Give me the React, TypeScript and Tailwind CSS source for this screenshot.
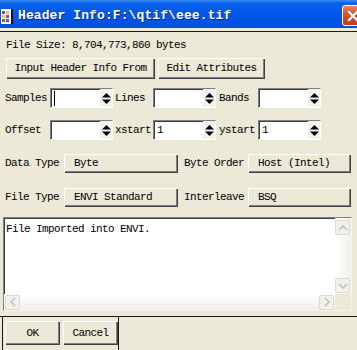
import type { ReactNode } from "react";

// Classic Win32-ish dialog: "Header Info" (ENVI)

const font = "font-['Liberation_Mono','DejaVu_Sans_Mono',monospace] text-[11px] tracking-[-0.6px]";

function Spinner() {
  return (
    <svg width="9" height="11" viewBox="0 0 9 11" aria-hidden>
      <polygon points="0,4.5 4.5,0 9,4.5" fill="#000" />
      <polygon points="0,6.5 4.5,11 9,6.5" fill="#000" />
    </svg>
  );
}

function Field({ value, caret }: { value?: string; caret?: boolean }) {
  return (
    <div className="w-[63px] h-[20px] flex bg-white border-t border-l border-[#808080] border-r border-b border-r-white border-b-white shadow-[inset_1px_1px_0_#404040]">
      <div className="flex-1 flex items-center pl-[3px] text-black">
        {caret ? <span className="w-px h-[15px] bg-black" /> : value}
      </div>
      <div className="w-[12px] flex items-center justify-center bg-[#F4F3EE]">
        <Spinner />
      </div>
    </div>
  );
}

function Btn({ children, className = "", left }: { children: ReactNode; className?: string; left?: boolean }) {
  return (
    <div
      className={`flex items-center ${left ? "justify-start pl-[10px]" : "justify-center"} bg-[#ECE9D8] text-black shadow-[inset_1px_1px_0_#fff,inset_-1px_-1px_0_#404040,inset_-2px_-2px_0_#808080] ${className}`}
    >
      {children}
    </div>
  );
}

function ArrowBtn({ dir, className = "" }: { dir: "up" | "down" | "left" | "right"; className?: string }) {
  const pts = {
    up: "2,8 6,4 10,8",
    down: "2,4 6,8 10,4",
    left: "8,2 4,6 8,10",
    right: "4,2 8,6 4,10",
  }[dir];
  return (
    <div className={`w-[15px] h-[15px] rounded-[2px] border border-[#DCDCD4] bg-[#F1F0EA] flex items-center justify-center ${className}`}>
      <svg width="12" height="12" viewBox="0 0 12 12" aria-hidden>
        <polyline points={pts} fill="none" stroke="#C4C3BC" strokeWidth="1.6" />
      </svg>
    </div>
  );
}

function AppIcon() {
  return (
    <svg width="13" height="15" viewBox="0 0 13 15" aria-hidden>
      <rect x="0" y="0" width="12" height="15" fill="#fff" />
      <rect x="1" y="2" width="3" height="3" fill="#3B5BD8" />
      <rect x="5" y="2" width="3" height="3" fill="#E8C23A" />
      <rect x="1" y="6" width="3" height="3" fill="#E8C23A" />
      <rect x="5" y="6" width="3" height="3" fill="#6B4FB8" />
      <rect x="1" y="10" width="3" height="3" fill="#D8483A" />
      <rect x="5" y="10" width="3" height="3" fill="#3B5BD8" />
      <rect x="10" y="0" width="2" height="15" fill="#111" />
    </svg>
  );
}

export default function App() {
  return (
    <div className={`w-[357px] h-[350px] overflow-hidden bg-[#ECE9D8] ${font}`}>
      {/* title bar */}
      <div className="h-[28px] pt-[3px] flex items-center bg-[linear-gradient(to_bottom,#3C8CF5_0%,#0A5FEA_12%,#0055E5_60%,#0050DC_100%)]">
        <div className="ml-[1px] mt-[1px]">
          <AppIcon />
        </div>
        <span className="ml-[4px] text-white font-bold text-[13px] tracking-[0.1px] [text-shadow:1px_1px_0_#0A2A8A]">
          Header Info:F:\qtif\eee.tif
        </span>
        <div className="ml-auto mr-[-7px] w-[22px] h-[21px] rounded-[3px] border border-white bg-[linear-gradient(to_bottom,#E9826A,#D4532F_40%,#C23A1A)] flex items-center justify-center">
          <svg width="12" height="12" viewBox="0 0 12 12" aria-hidden>
            <path d="M2 2 L10 10 M10 2 L2 10" stroke="#fff" strokeWidth="2.2" strokeLinecap="square" />
          </svg>
        </div>
      </div>
      <div className="mt-[3px] h-px bg-[#1A1A1A]" />

      <div className="pl-[6px] mt-[6px] leading-[14px] text-black">File Size: 8,704,773,860 bytes</div>

      <div className="flex gap-[3px] pl-[6px] mt-[6px]">
        <Btn className="w-[149px] h-[21px]">Input Header Info From</Btn>
        <Btn className="w-[107px] h-[21px]">Edit Attributes</Btn>
      </div>

      <div className="flex items-center pl-[5px] mt-[9px] text-black">
        <span className="w-[45px]">Samples</span>
        <Field caret />
        <span className="w-[40px] pl-[2px]">Lines</span>
        <Field />
        <span className="w-[42px] pl-[3px]">Bands</span>
        <Field />
      </div>

      <div className="flex items-center pl-[5px] mt-[12px] text-black">
        <span className="w-[45px]">Offset</span>
        <Field />
        <span className="w-[40px] pl-[2px]">xstart</span>
        <Field value="1" />
        <span className="w-[42px] pl-[3px]">ystart</span>
        <Field value="1" />
      </div>

      <div className="flex items-center pl-[5px] mt-[14px] text-black">
        <span className="w-[59px]">Data Type</span>
        <Btn left className="w-[114px] h-[19px]">Byte</Btn>
        <span className="w-[70px] pl-[6px]">Byte Order</span>
        <Btn left className="w-[103px] h-[19px]">Host (Intel)</Btn>
      </div>

      <div className="flex items-center pl-[5px] mt-[15px] text-black">
        <span className="w-[59px]">File Type</span>
        <Btn left className="w-[114px] h-[19px]">ENVI Standard</Btn>
        <span className="w-[70px] pl-[6px]">Interleave</span>
        <Btn left className="w-[103px] h-[19px]">BSQ</Btn>
      </div>

      {/* text area */}
      <div className="ml-[3px] mt-[10px] w-[349px] h-[94px] flex flex-col bg-white border-t border-l border-[#808080] border-r border-b border-r-[#F4F3EE] border-b-[#F4F3EE] shadow-[inset_1px_1px_0_#404040]">
        <div className="flex flex-1">
          <div className="flex-1 pl-[2px] pt-[4px] leading-[14px] text-black">File Imported into ENVI.</div>
          <div className="w-[16px] flex flex-col justify-between bg-[linear-gradient(to_right,#FFFFFF,#F1F0EA)] pt-[2px] pb-[1px]">
            <ArrowBtn dir="up" />
            <ArrowBtn dir="down" />
          </div>
        </div>
        <div className="h-[16px] flex">
          <div className="flex-1 flex justify-between items-center pl-[1px] pr-[1px] bg-[linear-gradient(to_bottom,#FFFFFF,#F1F0EA)]">
            <ArrowBtn dir="left" />
            <ArrowBtn dir="right" />
          </div>
          <div className="w-[16px] bg-[#ECE9D8]" />
        </div>
      </div>

      {/* bottom frame */}
      <div className="mt-[5px] border-t border-[#1A1A1A]">
        <div className="ml-[2px] w-[117px] h-[40px] border-l border-r border-[#1A1A1A] flex gap-[3px] pl-[2px] pt-[4px]">
          <Btn className="w-[55px] h-[24px]">OK</Btn>
          <Btn className="w-[55px] h-[24px]">Cancel</Btn>
        </div>
      </div>
    </div>
  );
}
